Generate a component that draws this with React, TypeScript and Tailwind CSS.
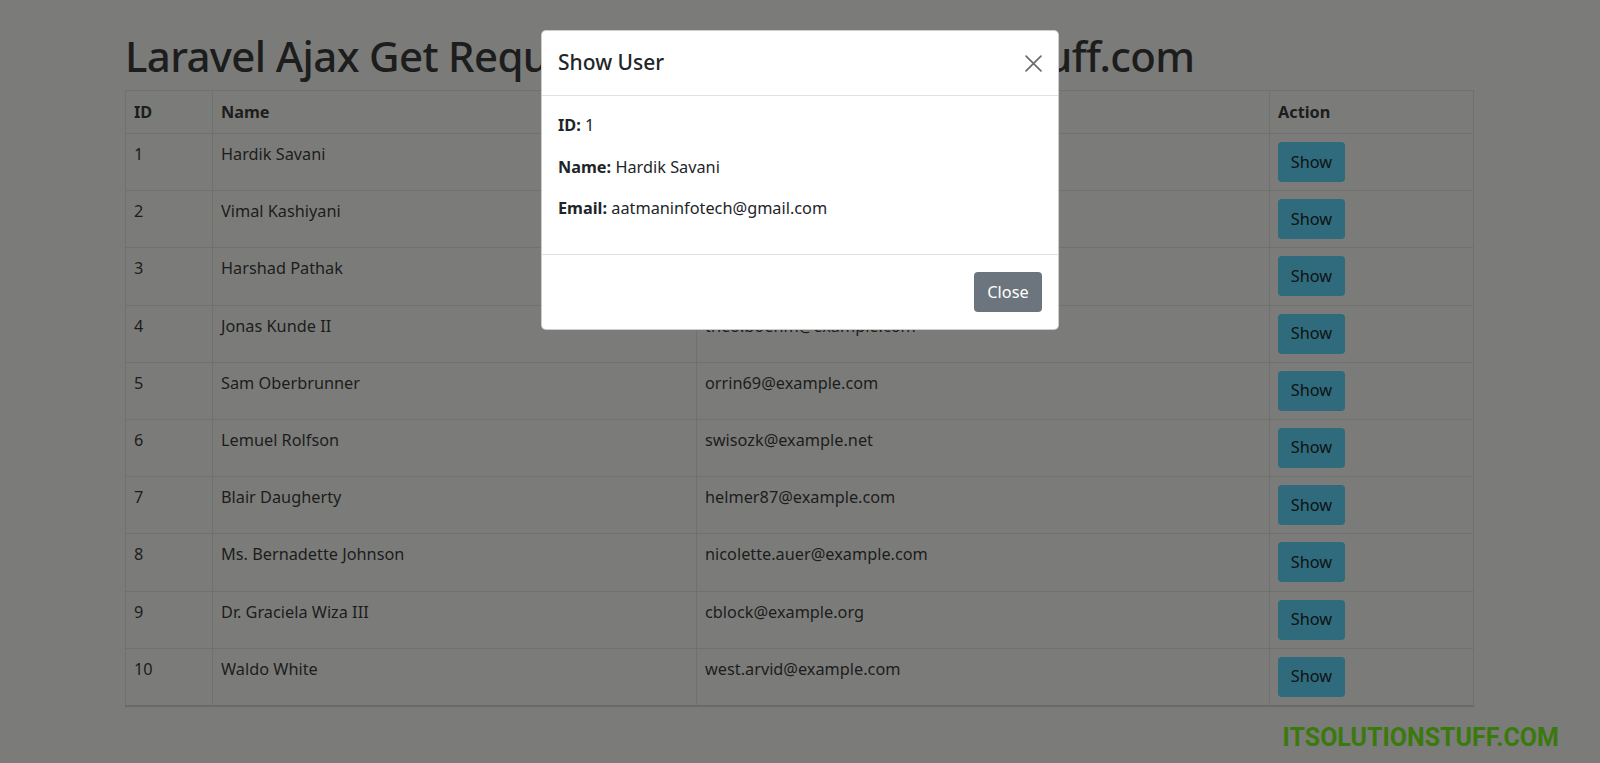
import React from 'react';

type User = { id: number; name: string; email: string };

const users: User[] = [
    { id: 1, name: 'Hardik Savani', email: 'aatmaninfotech@gmail.com' },
    { id: 2, name: 'Vimal Kashiyani', email: 'vimal@example.com' },
    { id: 3, name: 'Harshad Pathak', email: 'harshad@example.com' },
    { id: 4, name: 'Jonas Kunde II', email: 'theo.boehm@example.com' },
    { id: 5, name: 'Sam Oberbrunner', email: 'orrin69@example.com' },
    { id: 6, name: 'Lemuel Rolfson', email: 'swisozk@example.net' },
    { id: 7, name: 'Blair Daugherty', email: 'helmer87@example.com' },
    { id: 8, name: 'Ms. Bernadette Johnson', email: 'nicolette.auer@example.com' },
    { id: 9, name: 'Dr. Graciela Wiza III', email: 'cblock@example.org' },
    { id: 10, name: 'Waldo White', email: 'west.arvid@example.com' },
];

const font = { fontFamily: '"Noto Sans", "Open Sans", sans-serif' };

const App = () => {
    const selected = users[0];

    return (
        <div className="relative min-h-screen w-full bg-[#7b7c7a] text-[#1c1d1c]" style={font}>
            {/* --- Page content (dimmed by backdrop) --- */}
            <div className="w-[1349px] ml-[125px] pt-[30px]">
                <h1 className="text-[42px] leading-[51px] font-medium mb-[9px] tracking-[-0.65px]">
                    Laravel Ajax Get Request Example - ItSolutionStuff.com
                </h1>

                <table className="w-full border-collapse text-[16.3px] leading-[25px] border-b-2 border-b-[#6a6b69]">
                    <thead>
                        <tr className="h-[43px]">
                            <th className="w-[87px] border border-[#70716f] px-[8px] py-[8px] text-left font-bold align-middle">ID</th>
                            <th className="w-[484px] border border-[#70716f] px-[8px] py-[8px] text-left font-bold align-middle">Name</th>
                            <th className="w-[573px] border border-[#70716f] px-[8px] py-[8px] text-left font-bold align-middle">Email</th>
                            <th className="border border-[#70716f] px-[8px] py-[8px] text-left font-bold align-middle">Action</th>
                        </tr>
                    </thead>
                    <tbody>
                        {users.map((u) => (
                            <tr key={u.id}>
                                <td className="border border-[#70716f] px-[8px] pt-[8px] pb-[8.2px] align-top">{u.id}</td>
                                <td className="border border-[#70716f] px-[8px] pt-[8px] pb-[8.2px] align-top">{u.name}</td>
                                <td className="border border-[#70716f] px-[8px] pt-[8px] pb-[8.2px] align-top">{u.email}</td>
                                <td className="border border-[#70716f] px-[8px] pt-[8px] pb-[8.2px] align-top">
                                    <button className="h-[40px] w-[67px] rounded-[4px] bg-[#2f6b7c] text-[#0e1213] text-[16.3px]">
                                        Show
                                    </button>
                                </td>
                            </tr>
                        ))}
                    </tbody>
                </table>
            </div>

            {/* --- Watermark --- */}
            <div className="flex justify-end pr-[41px] mt-[12px]">
                <span className="text-[25px] font-bold text-[#3a790c]" style={{ fontFamily: 'Roboto, "Liberation Sans", sans-serif' }}>
                    ITSOLUTIONSTUFF.COM
                </span>
            </div>

            {/* --- Modal: Show User --- */}
            <div className="absolute left-[541px] top-[30px] w-[518px] rounded-[5px] bg-white text-[#212529] border border-black/20">
                <div className="flex items-center justify-between h-[65px] px-[16px] border-b border-[#dee2e6]">
                    <h5 className="text-[21px] font-medium">Show User</h5>
                    <button aria-label="Close" className="w-[18px] h-[18px] flex items-center justify-center">
                        <svg viewBox="0 0 16 16" className="w-[17px] h-[17px]" fill="none" stroke="#6b6b6b" strokeWidth="1.6" strokeLinecap="round">
                            <path d="M1 1L15 15M15 1L1 15" />
                        </svg>
                    </button>
                </div>
                <div className="px-[16px] pt-[17px] h-[159px] border-b border-[#dee2e6] text-[16.3px] leading-[25px]">
                    <p className="mb-[16.5px]"><strong>ID:</strong> {selected.id}</p>
                    <p className="mb-[16.5px]"><strong>Name:</strong> {selected.name}</p>
                    <p className="mb-[16.5px]"><strong>Email:</strong> {selected.email}</p>
                </div>
                <div className="flex justify-end items-center h-[74px] px-[16px]">
                    <button className="h-[40px] w-[68px] rounded-[4px] bg-[#6c757d] text-white text-[16.3px]">
                        Close
                    </button>
                </div>
            </div>
        </div>
    );
};

export default App;
